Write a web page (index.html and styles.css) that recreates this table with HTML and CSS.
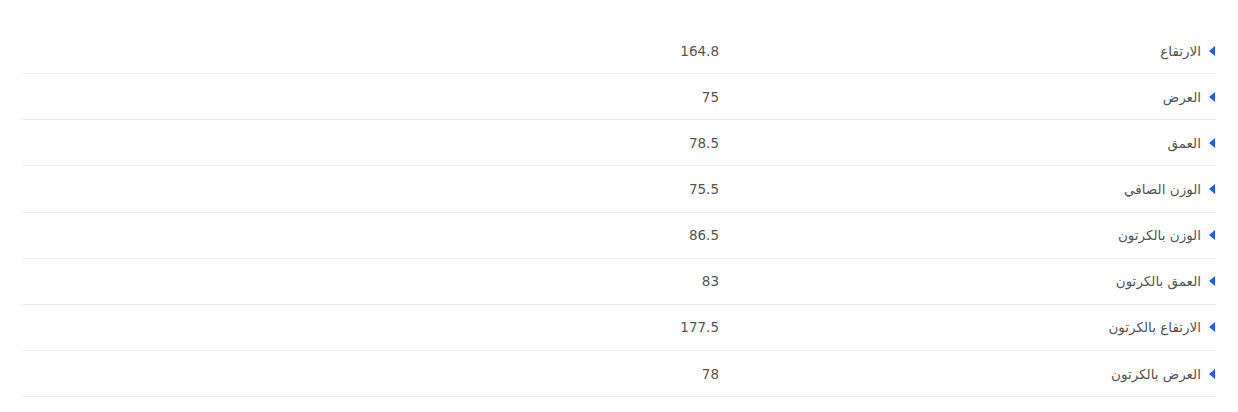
FILE: index.html
```html
<!DOCTYPE html>
<html lang="ar" dir="rtl">
<head>
    <meta charset="UTF-8">
    <meta name="viewport" content="width=device-width, initial-scale=1.0">
    <title>المواصفات</title>
    <link rel="stylesheet" href="styles.css">
</head>
<body>
    <div class="specs-wrapper">
        <table class="specs">
            <tbody>
                <tr>
                    <td class="spec-name">الارتفاع</td>
                    <td class="spec-value">164.8</td>
                </tr>
                <tr>
                    <td class="spec-name">العرض</td>
                    <td class="spec-value">75</td>
                </tr>
                <tr>
                    <td class="spec-name">العمق</td>
                    <td class="spec-value">78.5</td>
                </tr>
                <tr>
                    <td class="spec-name">الوزن الصافي</td>
                    <td class="spec-value">75.5</td>
                </tr>
                <tr>
                    <td class="spec-name">الوزن بالكرتون</td>
                    <td class="spec-value">86.5</td>
                </tr>
                <tr>
                    <td class="spec-name">العمق بالكرتون</td>
                    <td class="spec-value">83</td>
                </tr>
                <tr>
                    <td class="spec-name">الارتفاع بالكرتون</td>
                    <td class="spec-value">177.5</td>
                </tr>
                <tr>
                    <td class="spec-name">العرض بالكرتون</td>
                    <td class="spec-value">78</td>
                </tr>
            </tbody>
        </table>
    </div>
</body>
</html>
```

FILE: styles.css
```css
:root {
    --text: #555;
    --line: #e9e9e9;
    --accent: #1a5dff;
}

body {
    margin: 0;
    background: #fff;
    color: var(--text);
    font-family: "DejaVu Sans", "Noto Sans", sans-serif;
}

.specs-wrapper {
    padding: 28px 22px 0 23px;
}

.specs {
    width: 1193px;
    border-collapse: collapse;
}

.specs td {
    height: 45.15px;
    padding: 0;
    border-bottom: 1px solid var(--line);
    font-size: 13.5px;
    text-align: right;
    vertical-align: middle;
}

.specs td.spec-name {
    width: 482px;
    padding-right: 15px;
    position: relative;
}

.spec-name::before {
    content: "";
    position: absolute;
    right: 1px;
    top: 50%;
    margin-top: -5px;
    border-style: solid;
    border-width: 5px 6px 5px 0;
    border-color: transparent var(--accent) transparent transparent;
}
```
